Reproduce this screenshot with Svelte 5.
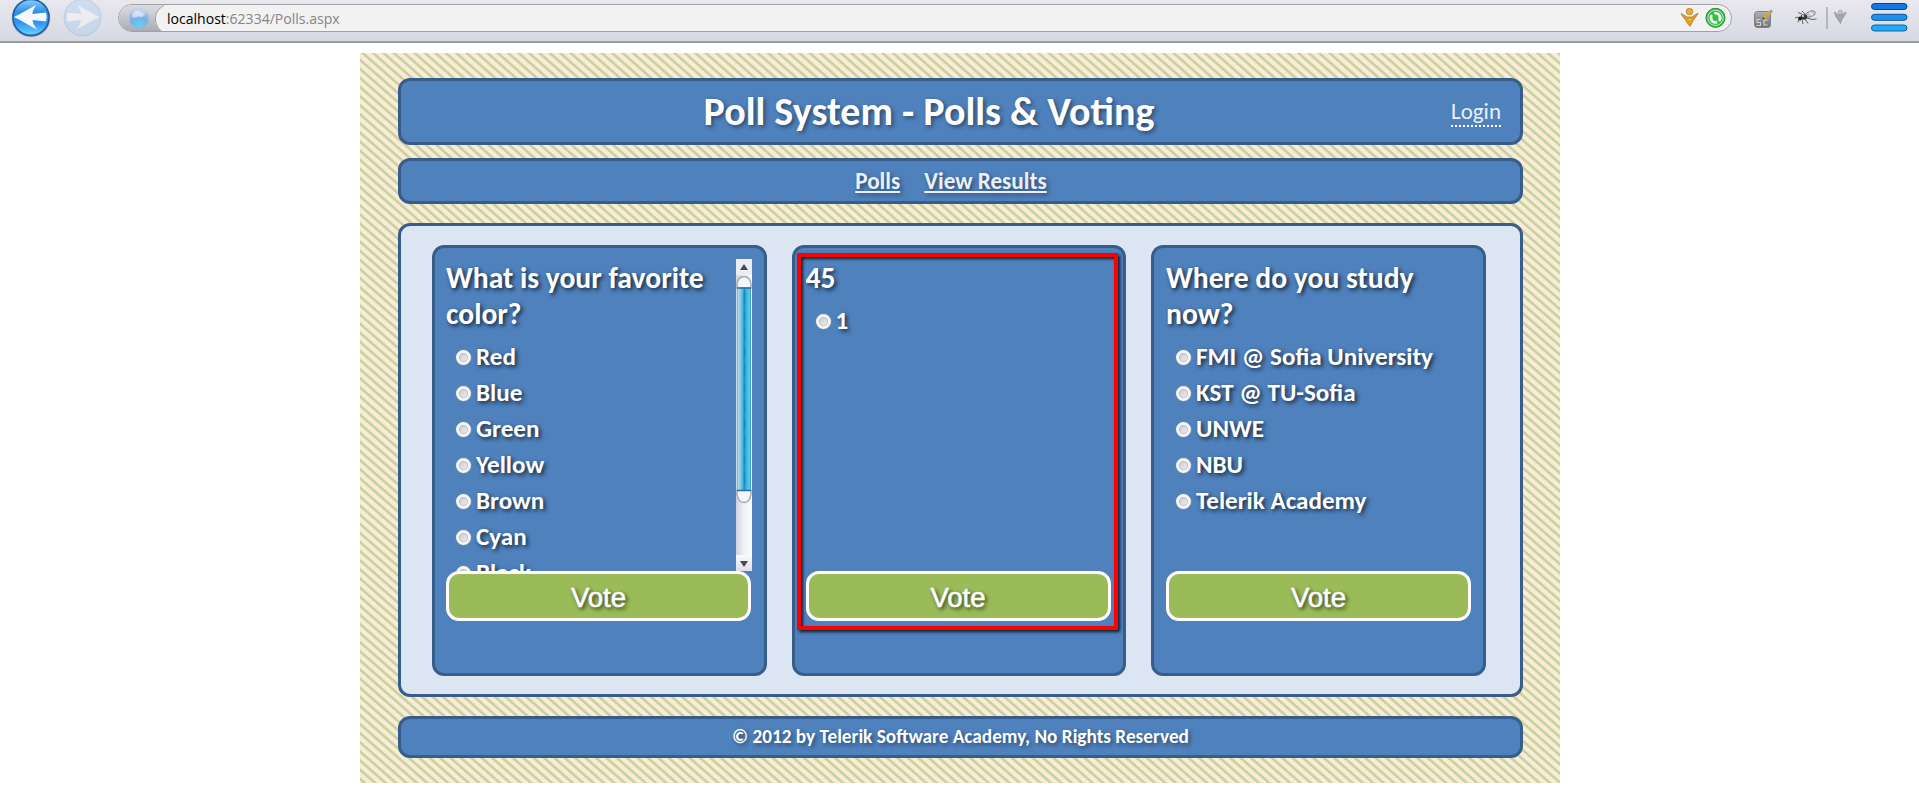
<script>
  const polls = [
    { question: 'What is your favorite color?', options: ['Red', 'Blue', 'Green', 'Yellow', 'Brown', 'Cyan', 'Black'], scroll: true },
    { question: '45', options: ['1'], marked: true },
    { question: 'Where do you study now?', options: ['FMI @ Sofia University', 'KST @ TU-Sofia', 'UNWE', 'NBU', 'Telerik Academy'] }
  ];
</script>

<div class="toolbar">
  <svg class="nav-icons" width="118" height="41" viewBox="0 0 118 41">
    <defs>
      <linearGradient id="orb" x1="0" y1="0" x2="0" y2="1">
        <stop offset="0" stop-color="#8fd0fb" /><stop offset=".35" stop-color="#2f8fe6" />
        <stop offset=".65" stop-color="#2c96f2" /><stop offset="1" stop-color="#6fd6ff" />
      </linearGradient>
    </defs>
    <circle cx="31" cy="18" r="19.3" fill="#5a6b85" opacity=".45" />
    <circle cx="31" cy="17.4" r="18" fill="url(#orb)" stroke="#1f5fa8" stroke-width="1.6" />
    <path d="M14 17 C22 13 29 9 36 5 C33 10 32.500 12 32.500 14 L46 12.500 C46.800 16 46.800 18 46 21.500 L32.500 20 C33 24 34.500 26 37 29.500 C29 25.500 22 21 14 17Z" fill="#f4f8fc" />
    <g opacity=".36">
      <circle cx="82.500" cy="17.500" r="18.300" fill="#a5cbf0" stroke="#8fb2dc" stroke-width="1.5" />
      <path d="M99.500 17 C91.500 13 84.500 9 77.500 5 C80.500 10 81 12 81 14 L67.500 12.500 C66.700 16 66.700 18 67.500 21.500 L81 20 C80.500 24 79 26 76.500 29.500 C84.500 25.500 91.500 21 99.500 17Z" fill="#fff" />
    </g>
  </svg>
  <div class="address">
    <svg class="identity" width="46" height="27" viewBox="0 0 46 27">
      <defs>
        <linearGradient id="idbg" x1="0" y1="0" x2="0" y2="1"><stop offset="0" stop-color="#dcdce2" /><stop offset="1" stop-color="#a9a9b4" /></linearGradient>
        <radialGradient id="globe" cx=".5" cy=".9" r=".9"><stop offset="0" stop-color="#62d2fa" /><stop offset=".5" stop-color="#7aaee2" /><stop offset="1" stop-color="#b4c8ea" /></radialGradient>
      </defs>
      <path d="M0 0 H46 C33 6 33 20 43 27 H0Z" fill="url(#idbg)" />
      <path d="M45 .5 C34 6 34 20 43 26.500" fill="none" stroke="#9b9ba2" />
      <circle cx="20" cy="13" r="10" fill="url(#globe)" />
      <path d="M13 10 q3 -5 7 -4 l5 3 -2 3 -4 -1 -3 2 -3 -1z" fill="#dcebfa" opacity=".6" />
      <ellipse cx="20" cy="8" rx="7" ry="4.500" fill="#fff" opacity=".3" />
    </svg>
    <div class="url"><span>localhost</span>:62334/Polls.aspx</div>
    <svg class="badges" width="51" height="27" viewBox="0 0 51 27">
      <path d="M1 8.500 L7 12 H12 L18 8 C17 12 13 14 12.500 17 L10 21.500 L6.500 17 C6 14 2 12 1 8.500Z" fill="#e0a02e" stroke="#a87418" stroke-width=".7" />
      <path d="M8.600 14 L9.800 15.500 L11 14Z" fill="#f4e2bd" />
      <circle cx="9.500" cy="6.500" r="3.300" fill="#e8ad3c" stroke="#b07c20" stroke-width=".7" />
      <circle cx="35.500" cy="12.800" r="9.500" fill="#35bd45" stroke="#258c33" stroke-width="1" />
      <circle cx="35.500" cy="12.800" r="7.700" fill="none" stroke="#baf2bd" stroke-width="1" />
      <circle cx="35.500" cy="12.800" r="4.600" fill="none" stroke="#e9fbe9" stroke-width="2.800" stroke-dasharray="11.500 2.950" transform="rotate(70 35.500 12.800)" />
    </svg>
  </div>
  <svg class="tools" width="187" height="41" viewBox="0 0 187 41">
    <defs>
      <linearGradient id="tile" x1="0" y1="0" x2="0" y2="1"><stop offset="0" stop-color="#b4b4b4" /><stop offset="1" stop-color="#6d6d6d" /></linearGradient>
    </defs>
    <rect x="22.500" y="11.500" width="16" height="16" rx="3" fill="url(#tile)" stroke="#808080" />
    <path d="M28.500 19.500 h-3.500 v3 h3.500 v3 h-4 M35.500 20 h-3.500 v5 h3.500" fill="none" stroke="#d2d2d2" stroke-width="1.200" />
    <path d="M32 18 L38.500 12" stroke="#dba82e" stroke-width="3" /><path d="M38 12.500 l2 -2" stroke="#a98" stroke-width="2.800" /><path d="M30.500 19.500 l.8 -2.500 1.600 1.700z" fill="#333" />
    <ellipse cx="78.500" cy="14" rx="5" ry="2.700" fill="#c9c9cd" stroke="#77777c" stroke-width=".8" transform="rotate(-20 78.500 14)" />
    <ellipse cx="72" cy="17" rx="3.300" ry="2.700" fill="#3a3a3a" /><circle cx="68" cy="18.500" r="2" fill="#1c1c1c" />
    <path d="M70 14 L66 12.500 M73 14 L70 11 M75 18 L80 19.500 L84.500 19 M73 19 L76 23.500 M70 19 L71 24 M67 19 L66 22.500 M66 17 L63 18" fill="none" stroke="#555" stroke-width=".9" />
    <circle cx="71" cy="16" r=".9" fill="#fff" /><path d="M77 12 l4 3" stroke="#fff" stroke-width="1" />
    <path d="M95 7 V29" stroke="#b6b6bd" stroke-width="2" />
    <path d="M102.500 12 L106.500 15 H109.500 L114 12 C113.500 16 110.500 17 108.500 23.500 C106 19 103 17 102.500 12Z" fill="#a5a5aa" stroke="#88888d" stroke-width=".6" />
    <circle cx="108.200" cy="12.500" r="2.200" fill="#c4c4c7" stroke="#8d8d92" stroke-width=".6" />
    <rect x="139.500" y="3.500" width="35.500" height="6" rx="3" fill="#1278dd" stroke="#0b458b" />
    <rect x="139.500" y="14.300" width="35.500" height="6" rx="3" fill="#1c93ea" stroke="#0d5595" />
    <rect x="139.500" y="25" width="35.500" height="6" rx="3" fill="#22a9f5" stroke="#0e65a5" />
  </svg>
</div>

<div class="page">
  <header class="box">
    <h1>Poll System - Polls &amp; Voting</h1>
    <a class="login" href="#login">Login</a>
  </header>
  <nav class="box"><a href="#polls">Polls</a><a href="#results">View Results</a></nav>
  <main>
    {#each polls as poll}
      <section class="card">
        <div class="body">
          <div class="content">
            <h2>{poll.question}</h2>
            {#each poll.options as option}
              <div class="option"><span class="radio"></span>{option}</div>
            {/each}
          </div>
          {#if poll.scroll}
            <svg class="scroll" width="16" height="312" viewBox="0 0 16 312">
              <defs>
                <linearGradient id="track"><stop offset="0" stop-color="#cfd2de" /><stop offset=".45" stop-color="#eeeff6" /><stop offset="1" stop-color="#fbfbff" /></linearGradient>
                <linearGradient id="thumb">
                  <stop offset="0" stop-color="#6bb7da" /><stop offset=".12" stop-color="#a8dcf0" /><stop offset=".4" stop-color="#55b3dc" />
                  <stop offset=".52" stop-color="#2189c9" /><stop offset=".65" stop-color="#37b3dc" /><stop offset=".9" stop-color="#58cbe9" /><stop offset="1" stop-color="#2d8dbd" />
                </linearGradient>
                <linearGradient id="btn" x1="0" y1="0" x2="0" y2="1"><stop offset="0" stop-color="#fafaff" /><stop offset="1" stop-color="#dddfe9" /></linearGradient>
              </defs>
              <rect width="16" height="312" fill="url(#track)" />
              <rect width="16" height="16" fill="#ececf4" /><rect y="296" width="16" height="16" fill="url(#btn)" />
              <path d="M4 11 L8 5 L12 11Z M4 302 H12 L8 308Z" fill="#48484c" />
              <path d="M1 29 V25 Q2 17.500 8 17.500 T15 25 V29Z M1 231 V235 Q2 243.500 8 243.500 T15 235 V231Z" fill="#f5f6fc" stroke="#a4a6ae" stroke-width="1.400" />
              <rect x="1" y="29" width="14" height="203" fill="url(#thumb)" />
              <path d="M1 29 H15 M1 231.500 H15" stroke="#2c6ca6" stroke-width="1.500" />
              <path d="M8.500 34 V230" stroke="#1772bb" stroke-width="1.600" stroke-dasharray="10 8" opacity=".4" />
            </svg>
          {/if}
        </div>
        <button>Vote</button>
        {#if poll.marked}<div class="marker"></div>{/if}
      </section>
    {/each}
  </main>
  <footer class="box">© 2012 by Telerik Software Academy, No Rights Reserved</footer>
</div>

<style>
  :global(body) { margin: 0; background: #fff; overflow: hidden; }
  .toolbar {
    display: flex; height: 41px; border-bottom: 2px solid #9b9b9f;
    background: linear-gradient(#e8e8ee, #d7d9e3);
  }
  .address {
    flex: 1; display: flex; box-sizing: border-box; height: 28px; margin-top: 4px;
    border: 1px solid #a2a2a6; border-radius: 14px; background: #f2f2f2; overflow: hidden;
  }
  .url { flex: 1; padding-left: 2px; font: 14.050px/28px "Segoe UI", "Open Sans", sans-serif; color: #858585; }
  .url span { color: #000; }
  .toolbar svg { flex: none; display: block; }

  .page {
    box-sizing: border-box; width: 1200px; height: 730px; margin: 10px 0 0 360px;
    padding: 25px 37px 25px 38px; display: flex; flex-direction: column;
    font-family: Calibri, Carlito, Lato, sans-serif; font-weight: 700; color: #fff;
    background: repeating-linear-gradient(41.2deg, #fde9d9 0 1.500px, #c3d69b 2.200px 4.200px, #fde9d9 4.900px 6.848px);
  }
  .box, main, .card { box-sizing: border-box; border: 3px solid #385d8a; border-radius: 12px; }
  .box { background: #4f81bd; display: flex; align-items: center; text-shadow: 2px 2px 4px rgba(0, 0, 0, .45); }
  header { height: 67px; padding: 0 19px 0 6px; }
  h1 { flex: 1; margin: 0; font-size: 40px; line-height: 61px; text-align: center; }
  .login {
    font-size: 23px; line-height: 28px; font-weight: 400; color: #e9f0f8; text-decoration: none;
    text-shadow: none; border-bottom: 2px dotted #fff;
  }
  nav { height: 46px; margin-top: 13px; padding: 0 19px 0 0; gap: 24px; justify-content: center; font-size: 23.200px; }
  nav a { color: #e9f0f8; text-decoration: underline 2px; text-underline-offset: 2px; text-decoration-skip-ink: none; }
  main {
    height: 474px; margin: 19px 0; padding: 19px 34px 18px 31px; background: #dce6f2;
    display: grid; grid-template-columns: repeat(3, 1fr); gap: 25px;
  }
  .card { position: relative; padding: 11px; background: #4f81bd; text-shadow: 2px 2px 4px rgba(0, 0, 0, .75); }
  .card:last-child { padding-left: 12px; }
  .body { display: flex; width: 306px; height: 312px; overflow: hidden; }
  .content { flex: 1; }
  .scroll { flex: none; }
  h2 { margin: 0 0 7px; padding-top: 1px; font-size: 29.600px; line-height: 36px; }
  .option { display: flex; align-items: center; height: 36px; padding-left: 10px; gap: 5px; font-size: 25.100px; line-height: 36px; white-space: nowrap; }
  .radio {
    box-sizing: border-box; width: 15px; height: 15px; border-radius: 50%; border: 3px solid #f4f4f4;
    background: linear-gradient(135deg, #c3c7cf, #f6f6f6); box-shadow: 0 0 0 .7px #85888f, inset 0 0 0 1px #b8bbc2;
  }
  button {
    display: block; box-sizing: border-box; width: 305px; height: 50px; padding: 3px 0 0;
    border: 3px solid #fff; border-radius: 13px; background: #9bbb59; color: #fff;
    font: 27.500px/41px "Liberation Sans", Arial, sans-serif; -webkit-text-stroke: .6px #fff; text-shadow: 2px 2px 4px rgba(0, 0, 0, .8);
  }
  .marker {
    position: absolute; left: 2px; top: 5px; box-sizing: border-box; width: 321px; height: 377px;
    border: 4px solid #f00; box-shadow: 2px 2px 3px rgba(0, 0, 0, .8), inset 2px 2px 3px rgba(0, 0, 0, .8);
  }
  footer { height: 42px; padding-bottom: 1px; justify-content: center; font-size: 19.250px; }
</style>
